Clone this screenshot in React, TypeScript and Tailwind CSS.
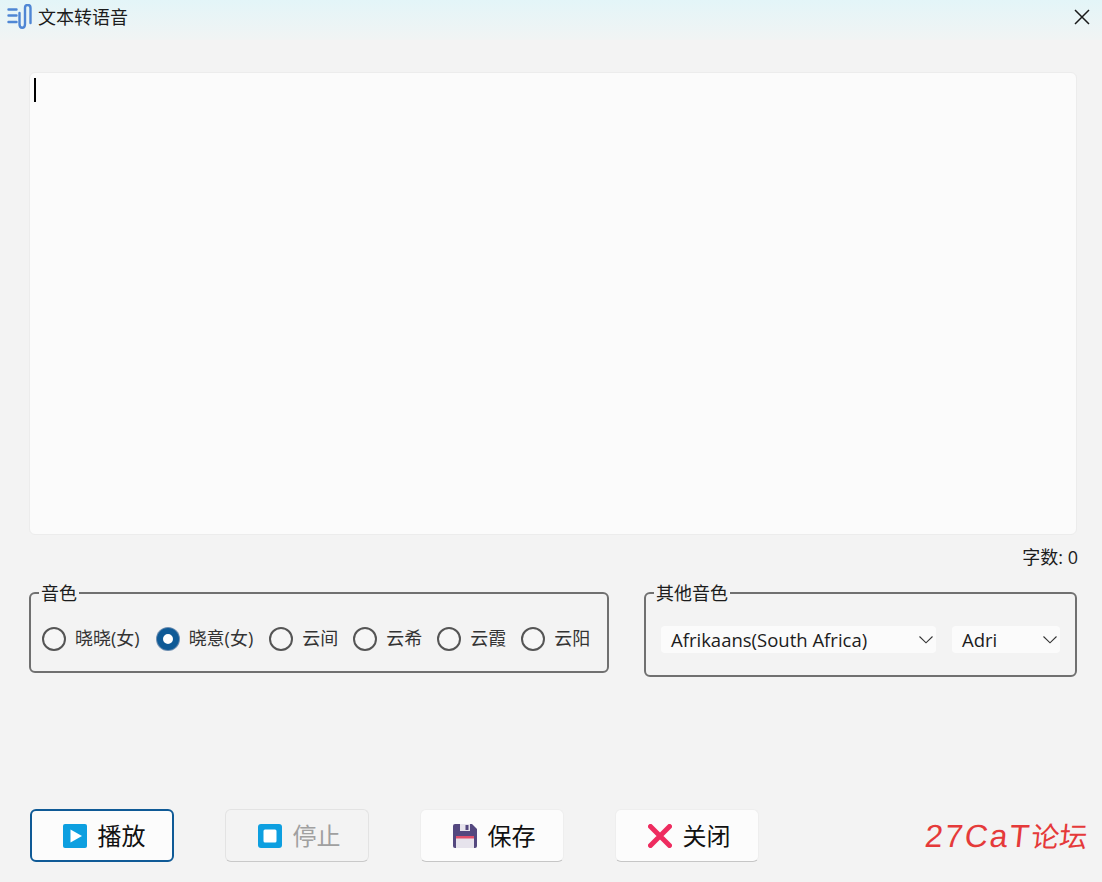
import { useState } from "react";

const FONT = "[font-family:'Open_Sans','Noto_Sans_CJK_SC',sans-serif]";

const voices = ["晓晓(女)", "晓意(女)", "云间", "云希", "云霞", "云阳"];

const Chevron = () => (
  <svg width="16" height="9" viewBox="0 0 16 9" fill="none" stroke="#333" strokeWidth="1.1">
    <path d="M1.500 1.500 8 7.800l6.500-6.300" />
  </svg>
);

const Logo = () => (
  <svg width="26" height="26" viewBox="0 0 26 26" fill="none" stroke="#4f86d4" strokeWidth="2.400" strokeLinecap="round">
    <path d="M1.500 5.500h8M1.500 11.500h8M1.500 18h8" />
    <path d="M12.500 9v11c0 5 5.500 5 5.500 0V4c0-4 5.500-4 5.500 0v15" />
  </svg>
);

const PlayIcon = () => (
  <svg width="24" height="24" viewBox="0 0 24 24">
    <rect width="24" height="24" rx="2" fill="#0d9fe0" />
    <path d="M7.500 5.500 19 12 7.500 18.500z" fill="#fff" />
  </svg>
);

const StopIcon = () => (
  <svg width="24" height="24" viewBox="0 0 24 24">
    <rect width="24" height="24" rx="3" fill="#0d9fe0" />
    <rect x="5.500" y="5.500" width="13" height="13" rx="1.500" fill="#fff" />
  </svg>
);

const SaveIcon = () => (
  <svg width="24" height="24" viewBox="0 0 24 24">
    <path d="M2 0h17l5 5v17a2 2 0 0 1-2 2H2a2 2 0 0 1-2-2V2a2 2 0 0 1 2-2z" fill="#54487f" />
    <rect x="3" y="12" width="18" height="12" fill="#e6e3ec" />
    <rect x="3" y="12" width="18" height="2.500" fill="#e0506b" />
    <rect x="7" y="0" width="10" height="7" fill="#e6e3ec" />
    <rect x="12.500" y="1" width="3" height="5" fill="#54487f" />
  </svg>
);

const CloseIcon = () => (
  <svg width="24" height="24" viewBox="0 0 24 24" fill="none" stroke="#ee2c5f" strokeWidth="5" strokeLinecap="round">
    <path d="M2.500 2.500 21.500 21.500M21.500 2.500 2.500 21.500" />
  </svg>
);

const App = () => {
  const [voice, setVoice] = useState(1);

  return (
    <div className={`flex h-[882px] w-[1102px] flex-col overflow-hidden bg-[#f3f3f3] text-[18px] text-[#1c1c1c] ${FONT}`}>
      <div className="flex h-10 shrink-0 items-center bg-gradient-to-b from-[#e3f5f8] to-[#f1f4f4] pb-[6px] pl-[7px] pr-[11px]">
        <Logo />
        <span className="ml-[5px] leading-6">文本转语音</span>
        <button className="ml-auto" aria-label="关闭">
          <svg width="18" height="18" viewBox="0 0 18 18" stroke="#1a1a1a" strokeWidth="1.500" className="block">
            <path d="M2 2l14 14M16 2 2 16" />
          </svg>
        </button>
      </div>

      <div className="ml-[29px] mt-[32px] h-[463px] w-[1048px] shrink-0 rounded-md border border-[#ececec] bg-[#fbfbfb] pl-[4px] pt-[5px]">
        <div className="h-[24px] w-[2px] bg-black" />
      </div>

      <div className="mr-[24px] mt-[10px] text-right leading-6">字数: 0</div>

      <div className="ml-[29px] mr-[25px] mt-[12px] flex items-start justify-between">
        <fieldset className="h-[92px] w-[580px] rounded-md border-2 border-[#707070] pl-[11px]">
          <legend className="ml-[-3px] px-[2px] leading-6">音色</legend>
          <div className="mt-[20px] flex items-center gap-[15px]">
            {voices.map((v, i) => (
              <label
                key={v}
                className={`flex cursor-pointer items-center gap-[9px] ${i < 2 ? "mr-[1px]" : ""}`}
                onClick={() => setVoice(i)}
              >
                {voice === i ? (
                  <span className="m-[1px] size-[22px] rounded-full border-[6px] border-[#0f5a96] bg-white ring-1 ring-[#6c8db0]" />
                ) : (
                  <span className="size-6 rounded-full border-2 border-[#555] bg-[#f6f6f6]" />
                )}
                <span className="text-[#333]">{v}</span>
              </label>
            ))}
          </div>
        </fieldset>

        <fieldset className="h-[96px] w-[433px] rounded-md border-2 border-[#707070] pl-[15px]">
          <legend className="ml-[-7px] px-[2px] leading-6">其他音色</legend>
          <div className="mt-[21px] flex items-center gap-[16px]">
            <div className="flex h-[27px] w-[275px] items-center justify-between rounded-[4px] bg-[#fbfbfb] pl-[10px] pr-[2px] text-[18.5px]">
              <span>Afrikaans(South Africa)</span>
              <Chevron />
            </div>
            <div className="flex h-[27px] w-[108px] items-center justify-between rounded-[4px] bg-[#fbfbfb] pl-[10px] pr-[2px] text-[18.5px]">
              <span>Adri</span>
              <Chevron />
            </div>
          </div>
        </fieldset>
      </div>

      <div className="mb-[20px] mt-auto flex items-end pl-[30px] pr-[15px]">
        <div className="flex gap-[51px]">
          <button className="flex h-[53px] w-[144px] items-center justify-center gap-[11px] rounded-md border-2 border-[#0f5a96] bg-[#fcfcfc] pl-[4px] text-[24px] text-[#111]">
            <PlayIcon />
            播放
          </button>
          <button disabled className="flex h-[53px] w-[144px] items-center justify-center gap-[11px] rounded-md border border-[#e3e3e3] border-b-[#c9c9c9] bg-[#f3f3f3] pl-[4px] text-[24px] text-[#a0a0a0]">
            <StopIcon />
            停止
          </button>
          <button className="flex h-[53px] w-[144px] items-center justify-center gap-[11px] rounded-md border border-[#eeeeee] border-b-[#c6c6c6] bg-[#fcfcfc] pl-[4px] text-[24px] text-[#111]">
            <SaveIcon />
            保存
          </button>
          <button className="flex h-[53px] w-[144px] items-center justify-center gap-[11px] rounded-md border border-[#eeeeee] border-b-[#c6c6c6] bg-[#fcfcfc] pl-[4px] text-[24px] text-[#111]">
            <CloseIcon />
            关闭
          </button>
        </div>
        <span className="mb-[1px] ml-auto -skew-x-6 whitespace-nowrap leading-10 text-[#e53a3a] [font-family:'Liberation_Sans','Noto_Sans_CJK_SC',sans-serif]">
          <span className="text-[32px] tracking-[2px]">27CaT</span>
          <span className="text-[28px]">论坛</span>
        </span>
      </div>
    </div>
  );
};

export default App;
